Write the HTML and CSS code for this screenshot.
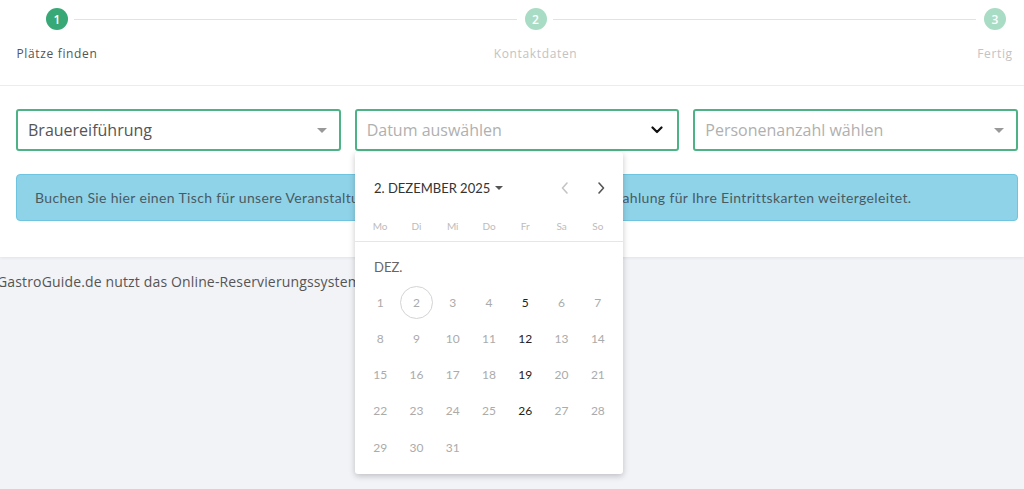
FILE: index.html
```html
<!DOCTYPE html>
<html lang="de">
<head>
<meta charset="utf-8">
<title>Reservierung</title>
<link rel="stylesheet" href="styles.css">
</head>
<body>
<div class="card">
  <div class="stepper">
    <div class="step-circle active">1</div>
    <div class="step-line"></div>
    <div class="step-circle">2</div>
    <div class="step-line"></div>
    <div class="step-circle">3</div>
    <div class="step-label active l1">Plätze finden</div>
    <div class="step-label l2">Kontaktdaten</div>
    <div class="step-label l3">Fertig</div>
  </div>
  <div class="form">
    <div class="selects">
      <div class="select">
        <span class="value">Brauereiführung</span>
        <span class="caret"></span>
      </div>
      <div class="select">
        <span class="placeholder">Datum auswählen</span>
        <svg class="chevron" width="12" height="8" viewBox="0 0 12 8"><path d="M1.5 1.5 L6 6 L10.5 1.5" fill="none" stroke="#111" stroke-width="2.2" stroke-linecap="round" stroke-linejoin="round"/></svg>
      </div>
      <div class="select">
        <span class="placeholder">Personenanzahl wählen</span>
        <span class="caret"></span>
      </div>
    </div>
    <div class="alert">Buchen Sie hier einen Tisch für unsere Veranstaltung. Nach Ihrer Buchung werden Sie zur Zahlung für Ihre Eintrittskarten weitergeleitet.</div>
  </div>
</div>
<div class="footer-text">GastroGuide.de nutzt das Online-Reservierungssystem von GastroGuide.</div>

<div class="calendar">
  <div class="cal-header">
    <div class="cal-title">2. DEZEMBER 2025 <span class="cal-caret"></span></div>
    <div class="cal-nav">
      <svg width="10" height="14" viewBox="0 0 10 14"><path d="M7 2 L2.5 7 L7 12" fill="none" stroke="#c4c4c4" stroke-width="1.6" stroke-linecap="round" stroke-linejoin="round"/></svg>
      <svg width="10" height="14" viewBox="0 0 10 14"><path d="M3 2 L7.5 7 L3 12" fill="none" stroke="#555" stroke-width="1.6" stroke-linecap="round" stroke-linejoin="round"/></svg>
    </div>
  </div>
  <div class="cal-weekdays">
    <span>Mo</span><span>Di</span><span>Mi</span><span>Do</span><span>Fr</span><span>Sa</span><span>So</span>
  </div>
  <div class="cal-month">DEZ.</div>
  <div class="cal-days">
    <span>1</span><span class="today">2</span><span>3</span><span>4</span><span class="on">5</span><span>6</span><span>7</span>
    <span>8</span><span>9</span><span>10</span><span>11</span><span class="on">12</span><span>13</span><span>14</span>
    <span>15</span><span>16</span><span>17</span><span>18</span><span class="on">19</span><span>20</span><span>21</span>
    <span>22</span><span>23</span><span>24</span><span>25</span><span class="on">26</span><span>27</span><span>28</span>
    <span>29</span><span>30</span><span>31</span>
  </div>
</div>
</body>
</html>
```
FILE: styles.css
```css
* { box-sizing: border-box; }

body {
  margin: 0;
  background: #f2f3f7;
  font-family: "Open Sans", "Liberation Sans", sans-serif;
  overflow: hidden;
}

.card {
  background: #fff;
  box-shadow: 0 1px 3px rgba(0, 0, 0, 0.07);
}

.stepper {
  display: grid;
  grid-template-columns: 22px 455fr 22px 436fr 22px;
  grid-template-rows: 22px auto;
  padding: 8px 18px 0 46px;
  height: 86px;
  border-bottom: 1px solid #ececec;
}

.step-circle {
  width: 22px;
  height: 22px;
  border-radius: 50%;
  background: #a9dcc5;
  color: #fff;
  font-size: 12px;
  font-weight: 600;
  display: flex;
  align-items: center;
  justify-content: center;
}
.step-circle.active { background: #38a876; }

.step-line {
  align-self: center;
  height: 1px;
  background: #e2e2e2;
  margin: 0 8px 0 6px;
}

.step-label {
  grid-row: 2;
  justify-self: center;
  white-space: nowrap;
  font-size: 12px;
  color: #c3c3c3;
  margin-top: 15px;
  letter-spacing: 0.65px;
}
.step-label.active { color: #555; }
.l1 { grid-column: 1; }
.l2 { grid-column: 3; }
.l3 { grid-column: 5; }

.form {
  padding: 23px 6px 36px 16px;
}

.selects {
  display: grid;
  grid-template-columns: repeat(3, 1fr);
  gap: 14px;
}

.select {
  height: 42px;
  border: 2px solid #4db386;
  border-radius: 3px;
  display: flex;
  align-items: center;
  justify-content: space-between;
  padding: 0 12px 0 10px;
  font-size: 16px;
}
.value { color: #555; }
.placeholder { color: #b0b0b0; }

.caret {
  width: 0;
  height: 0;
  border-left: 5px solid transparent;
  border-right: 5px solid transparent;
  border-top: 5px solid #999;
}

.chevron { margin-right: 2px; }

.alert {
  margin-top: 23px;
  height: 47px;
  background: #8fd3e9;
  border: 1px solid #6fc5e0;
  border-radius: 4px;
  padding: 0 18px;
  display: flex;
  align-items: center;
  font-family: "Lato", "Liberation Sans", sans-serif;
  font-size: 14px;
  letter-spacing: 0.35px;
  color: #4a5a62;
  white-space: nowrap;
  overflow: hidden;
}

.footer-text {
  margin: 15px 0 0 -3px;
  font-size: 14px;
  line-height: 20px;
  letter-spacing: 0.15px;
  color: #555;
  white-space: nowrap;
}

/* calendar popup overlaying content */
.calendar {
  position: absolute;
  left: 355px;
  top: 152px;
  width: 268px;
  height: 322px;
  background: #fff;
  border-radius: 3px;
  box-shadow: 0 2px 6px rgba(0, 0, 0, 0.22);
  font-family: "Lato", "Liberation Sans", sans-serif;
}

.cal-header {
  display: flex;
  align-items: center;
  justify-content: space-between;
  height: 24px;
  margin-top: 24px;
  padding: 0 17px 0 19px;
}

.cal-title {
  font-size: 13px;
  color: #333;
  display: flex;
  align-items: center;
  gap: 5px;
}
.cal-caret {
  width: 0;
  height: 0;
  border-left: 4px solid transparent;
  border-right: 4px solid transparent;
  border-top: 4px solid #555;
}

.cal-nav {
  display: flex;
  gap: 26px;
  align-items: center;
}

.cal-weekdays {
  display: grid;
  grid-template-columns: repeat(7, 1fr);
  margin-top: 16px;
  padding: 0 7px 6px;
  height: 26px;
  border-bottom: 1px solid #e6e6e6;
  font-size: 10px;
  color: #bcbcbc;
  text-align: center;
  line-height: 20px;
}

.cal-month {
  margin-top: 15px;
  padding-left: 19px;
  font-size: 13px;
  line-height: 20px;
  color: #666;
}

.cal-days {
  display: grid;
  grid-template-columns: repeat(7, 1fr);
  grid-auto-rows: 36.25px;
  margin-top: 7px;
  padding: 0 7px;
  font-size: 12px;
  color: #ababab;
}
.cal-days span {
  display: flex;
  align-items: center;
  justify-content: center;
}
.cal-days .on { color: #222; }
.cal-days .today {
  width: 33px;
  height: 33px;
  margin: auto;
  border: 1px solid #d4d4d4;
  border-radius: 50%;
}
```
